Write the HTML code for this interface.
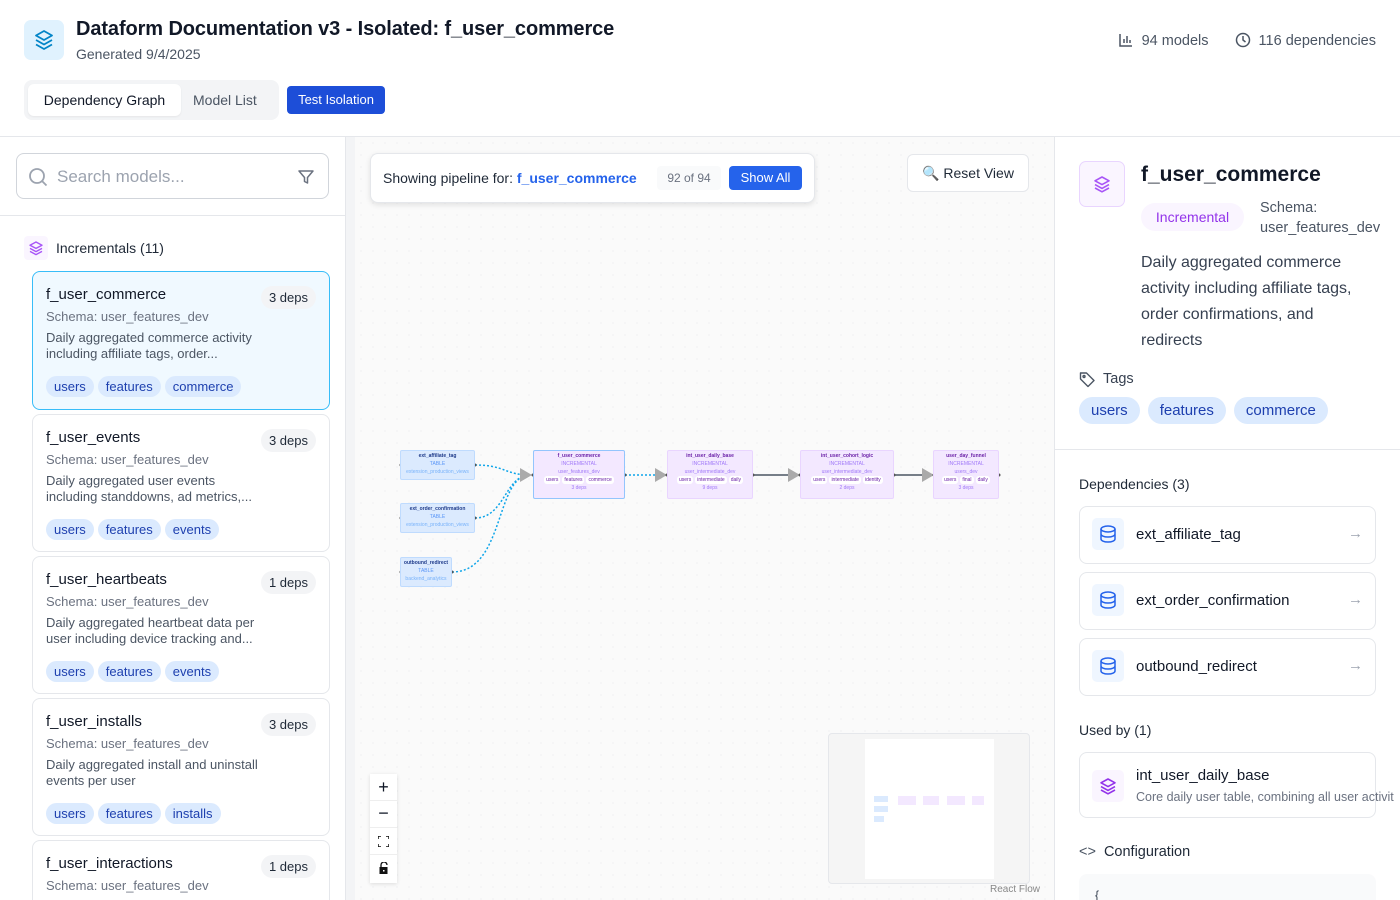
<!DOCTYPE html>
<html style="width:1400px;height:900px;overflow:hidden"><head><meta charset="utf-8"><style>
*{box-sizing:border-box;margin:0;padding:0}
body{width:1400px;height:900px;overflow:hidden;background:#fff;font-family:"Liberation Sans",sans-serif;color:#111827;position:relative}
.abs{position:absolute}
.tag{display:inline-block;background:#dbeafe;color:#1e40af;border-radius:12px;padding:3px 8px;font-size:13px;margin-right:4px}
.card{position:absolute;left:32px;width:298px;height:138px;border:1px solid #e5e7eb;border-radius:8px;background:#fff;padding:14px 13px}
.card .t{font-size:15px;color:#111827}
.card .s{font-size:13px;color:#6b7280;margin-top:6px}
.card .d{font-size:13px;color:#4b5563;margin-top:6px;line-height:16px;width:215px}
.card .tags{margin-top:14px}
.card .deps{position:absolute;right:13px;top:14px;background:#f3f4f6;border-radius:12px;padding:4px 8px;font-size:13px;color:#1f2937}
.node{position:absolute;font-size:5px;text-align:center;line-height:8px;border-radius:2px}
.tb{background:#dbeafe;border:1px solid #bfdbfe;color:#1e3a8a}
.inc{background:#f3e8ff;border:1px solid #e9d5ff;color:#6b21a8}
.node i{font-style:normal;display:block;color:#8b5cf6;opacity:.8}
.node .pl{display:inline-block;background:#fff;border-radius:3px;padding:0 2px;margin:0 1px;color:#6b21a8}
.dep{position:absolute;left:1079px;width:297px;height:58px;border:1px solid #e5e7eb;border-radius:8px;background:#fff}
.dep .ic{position:absolute;left:12px;top:11px;width:32px;height:32px;border-radius:5px;background:#eff6ff}
.dep .n{position:absolute;left:56px;top:19px;font-size:15px}
.dep .ar{position:absolute;right:12px;top:18px;color:#9ca3af;font-size:15px}
.rt{display:inline-block;background:#dbeafe;color:#1e40af;font-size:15px;padding:5px 12px;border-radius:14px;margin-right:8px}
</style></head><body>
<!-- header -->
<div class="abs" style="left:24px;top:20px;width:40px;height:40px;border-radius:7px;background:#e0f2fe">
<svg width="40" height="40" viewBox="0 0 40 40" fill="none" stroke="#0284c7" stroke-width="1.8" stroke-linejoin="round"><path d="M20 11l-8 4.5 8 4.5 8-4.5z"/><path d="M12 20l8 4.5 8-4.5"/><path d="M12 24.5l8 4.5 8-4.5"/></svg></div>
<div class="abs" style="left:76px;top:18px;font-size:20px;font-weight:bold;color:#111827;letter-spacing:-0.1px">Dataform Documentation v3 - Isolated: f_user_commerce</div>
<div class="abs" style="left:76px;top:46px;font-size:14px;color:#4b5563">Generated 9/4/2025</div>
<div class="abs" style="right:24px;top:32px;font-size:14.5px;color:#4b5563;white-space:nowrap">
<svg width="14" height="14" style="vertical-align:-2px;margin-right:9px" fill="none" stroke="#4b5563" stroke-width="1.5"><path d="M1 1v12h12M5 10V6M8 10V3M11 10V7"/></svg>94 models
<svg width="16" height="16" style="vertical-align:-3px;margin:0 8px 0 22px" fill="none" stroke="#4b5563" stroke-width="1.5"><circle cx="8" cy="8" r="6.5"/><path d="M8 4v4l2.5 2"/></svg>116 dependencies</div>
<div class="abs" style="left:24px;top:80px;width:255px;height:40px;background:#f3f4f6;border-radius:8px"></div>
<div class="abs" style="left:28px;top:84px;width:153px;height:32px;background:#fff;border-radius:6px;box-shadow:0 1px 2px rgba(0,0,0,.06);font-size:14px;line-height:32px;text-align:center">Dependency Graph</div>
<div class="abs" style="left:193px;top:84px;font-size:14px;line-height:32px;color:#4b5563">Model List</div>
<div class="abs" style="left:287px;top:86px;width:98px;height:28px;background:#1d4ed8;border-radius:4px;color:#fff;font-size:13px;line-height:28px;text-align:center">Test Isolation</div>
<div class="abs" style="left:0;top:136px;width:1400px;height:1px;background:#e5e7eb"></div>

<!-- left panel -->
<div class="abs" style="left:345px;top:137px;width:10px;height:763px;background:#f3f4f6;border-left:1px solid #e5e7eb"></div>
<div class="abs" style="left:16px;top:153px;width:313px;height:46px;border:1px solid #d1d5db;border-radius:8px">
<svg class="abs" style="left:11px;top:13px" width="20" height="20" fill="none" stroke="#9ca3af" stroke-width="1.8"><circle cx="9" cy="9" r="7"/><path d="M14 14l4.5 4.5"/></svg>
<div class="abs" style="left:40px;top:13px;font-size:17px;color:#9ca3af">Search models...</div>
<svg class="abs" style="left:280px;top:14px" width="18" height="18" fill="none" stroke="#6b7280" stroke-width="1.5" stroke-linejoin="round"><path d="M2 3h14l-5.5 6.5V15l-3-1.5v-4z"/></svg></div>
<div class="abs" style="left:0;top:215px;width:345px;height:1px;background:#e5e7eb"></div>
<div class="abs" style="left:24px;top:236px;width:24px;height:24px;border-radius:4px;background:#faf5ff">
<svg width="24" height="24" fill="none" stroke="#a855f7" stroke-width="1.4" stroke-linejoin="round"><path d="M12 6l-6 3.2 6 3.2 6-3.2z"/><path d="M6 12.4l6 3.2 6-3.2"/><path d="M6 15.4l6 3.2 6-3.2"/></svg></div>
<div class="abs" style="left:56px;top:240px;font-size:14px;color:#1f2937">Incrementals (11)</div>

<div class="card" style="top:271px;height:139px;background:#f0f9ff;border-color:#38bdf8"><div class="t">f_user_commerce</div><div class="s">Schema: user_features_dev</div><div class="d">Daily aggregated commerce activity including affiliate tags, order...</div><div class="tags"><span class="tag">users</span><span class="tag">features</span><span class="tag">commerce</span></div><div class="deps">3 deps</div></div>
<div class="card" style="top:414px"><div class="t">f_user_events</div><div class="s">Schema: user_features_dev</div><div class="d">Daily aggregated user events including standdowns, ad metrics,...</div><div class="tags"><span class="tag">users</span><span class="tag">features</span><span class="tag">events</span></div><div class="deps">3 deps</div></div>
<div class="card" style="top:556px"><div class="t">f_user_heartbeats</div><div class="s">Schema: user_features_dev</div><div class="d">Daily aggregated heartbeat data per user including device tracking and...</div><div class="tags"><span class="tag">users</span><span class="tag">features</span><span class="tag">events</span></div><div class="deps">1 deps</div></div>
<div class="card" style="top:698px"><div class="t">f_user_installs</div><div class="s">Schema: user_features_dev</div><div class="d">Daily aggregated install and uninstall events per user</div><div class="tags"><span class="tag">users</span><span class="tag">features</span><span class="tag">installs</span></div><div class="deps">3 deps</div></div>
<div class="card" style="top:840px;height:60px;border-bottom:none;border-radius:8px 8px 0 0"><div class="t">f_user_interactions</div><div class="s">Schema: user_features_dev</div><div class="deps">1 deps</div></div>

<!-- canvas -->
<div class="abs" style="left:355px;top:137px;width:700px;height:763px;background:#fafafa;background-image:radial-gradient(#e5e7eb 0.6px,transparent 0.7px);background-size:12px 12px"></div>
<div class="abs" style="left:1054px;top:137px;width:1px;height:763px;background:#e5e7eb"></div>
<div class="abs" style="left:370px;top:153px;width:445px;height:50px;background:#fff;border:1px solid #e5e7eb;border-radius:8px;box-shadow:0 2px 6px rgba(0,0,0,.1)">
<div class="abs" style="left:12px;top:16px;font-size:14px;color:#1f2937">Showing pipeline for: <span style="color:#2563eb;font-weight:bold">f_user_commerce</span></div>
<div class="abs" style="left:286px;top:12px;width:64px;height:24px;background:#f9fafb;border-radius:4px;font-size:12px;color:#6b7280;line-height:24px;text-align:center">92 of 94</div>
<div class="abs" style="left:358px;top:12px;width:73px;height:24px;background:#2563eb;border-radius:4px;font-size:13px;color:#fff;line-height:24px;text-align:center">Show All</div></div>
<div class="abs" style="left:907px;top:154px;width:122px;height:38px;background:#fff;border:1px solid #e5e7eb;border-radius:6px;font-size:14px;line-height:36px;text-align:center;color:#1f2937">🔍 Reset View</div>

<svg class="abs" style="left:355px;top:137px" width="700" height="763">
<g fill="none" stroke="#0ea5e9" stroke-width="1.5" stroke-dasharray="2 2">
<path d="M120 328 C150 328 150 338 175 338"/>
<path d="M120 381 C150 381 150 338 175 338"/>
<path d="M97 435 C150 435 140 338 175 338"/>
<path d="M270 338 L310 338"/></g>
<g stroke="#4b5563" stroke-width="1.5"><path d="M399 338h40M540 338h35"/></g>
<g fill="#aaa"><path d="M165 331l12 7-12 7z"/><path d="M300 331l12 7-12 7z"/><path d="M433 331l12 7-12 7z"/><path d="M567 331l12 7-12 7z"/></g>
<g fill="#555"><circle cx="46" cy="328" r="1.5"/><circle cx="120" cy="328" r="1.5"/><circle cx="46" cy="381" r="1.5"/><circle cx="120" cy="381" r="1.5"/><circle cx="46" cy="435" r="1.5"/><circle cx="97" cy="435" r="1.5"/><circle cx="178" cy="338" r="1.5"/><circle cx="270" cy="338" r="1.5"/><circle cx="312" cy="338" r="1.5"/><circle cx="398" cy="338" r="1.5"/><circle cx="445" cy="338" r="1.5"/><circle cx="539" cy="338" r="1.5"/><circle cx="579" cy="338" r="1.5"/><circle cx="644" cy="338" r="1.5"/></g>
</svg>
<div class="node tb" style="left:400px;top:450px;width:75px;height:30px;padding-top:1px"><b>ext_affiliate_tag</b><i style="color:#3b82f6">TABLE</i><i style="color:#60a5fa">extension_production_views</i></div>
<div class="node tb" style="left:400px;top:503px;width:75px;height:30px;padding-top:1px"><b>ext_order_confirmation</b><i style="color:#3b82f6">TABLE</i><i style="color:#60a5fa">extension_production_views</i></div>
<div class="node tb" style="left:400px;top:557px;width:52px;height:30px;padding-top:1px"><b>outbound_redirect</b><i style="color:#3b82f6">TABLE</i><i style="color:#60a5fa">backend_analytics</i></div>
<div class="node inc" style="left:533px;top:450px;width:92px;height:49px;border-color:#93c5fd;padding-top:1px"><b>f_user_commerce</b><i>INCREMENTAL</i><i>user_features_dev</i><span class="pl">users</span><span class="pl">features</span><span class="pl">commerce</span><i>3 deps</i></div>
<div class="node inc" style="left:667px;top:450px;width:86px;height:49px;padding-top:1px"><b>int_user_daily_base</b><i>INCREMENTAL</i><i>user_intermediate_dev</i><span class="pl">users</span><span class="pl">intermediate</span><span class="pl">daily</span><i>9 deps</i></div>
<div class="node inc" style="left:800px;top:450px;width:94px;height:49px;padding-top:1px"><b>int_user_cohort_logic</b><i>INCREMENTAL</i><i>user_intermediate_dev</i><span class="pl">users</span><span class="pl">intermediate</span><span class="pl">identity</span><i>2 deps</i></div>
<div class="node inc" style="left:933px;top:450px;width:66px;height:49px;padding-top:1px"><b>user_day_funnel</b><i>INCREMENTAL</i><i>users_dev</i><span class="pl">users</span><span class="pl">final</span><span class="pl">daily</span><i>3 deps</i></div>

<div class="abs" style="left:370px;top:774px;width:27px;height:109px;background:#fff;box-shadow:0 1px 4px rgba(0,0,0,.12)">
<div style="height:27px;border-bottom:1px solid #eee;text-align:center;font-size:18px;line-height:27px">+</div>
<div style="height:27px;border-bottom:1px solid #eee;text-align:center;font-size:18px;line-height:25px">−</div>
<div style="height:27px;border-bottom:1px solid #eee;position:relative"><svg class="abs" style="left:8px;top:8px" width="11" height="11" fill="none" stroke="#111" stroke-width="1.5"><path d="M0 3V0h3M8 0h3v3M11 8v3H8M3 11H0V8"/></svg></div>
<div style="height:27px;position:relative"><svg class="abs" style="left:9px;top:7px" width="10" height="13"><path d="M2 5V3a3 3 0 0 1 6 0" fill="none" stroke="#111" stroke-width="1.3"/><rect x="0.5" y="5" width="8" height="7" fill="#111"/><rect x="4" y="8" width="1.5" height="1.5" fill="#fff"/></svg></div></div>
<div class="abs" style="left:828px;top:733px;width:202px;height:151px;background:#f5f5f5;border:1px solid #e5e7eb;border-radius:4px">
<div class="abs" style="left:36px;top:5px;width:129px;height:140px;background:#fff"></div>
<div class="abs" style="left:45px;top:62px;width:14px;height:6px;background:#dbeafe"></div>
<div class="abs" style="left:45px;top:72px;width:14px;height:6px;background:#dbeafe"></div>
<div class="abs" style="left:45px;top:82px;width:10px;height:6px;background:#dbeafe"></div>
<div class="abs" style="left:69px;top:62px;width:18px;height:9px;background:#f3e8ff"></div>
<div class="abs" style="left:94px;top:62px;width:16px;height:9px;background:#f3e8ff"></div>
<div class="abs" style="left:118px;top:62px;width:18px;height:9px;background:#f3e8ff"></div>
<div class="abs" style="left:143px;top:62px;width:12px;height:9px;background:#f3e8ff"></div></div>
<div class="abs" style="left:990px;top:884px;font-size:10px;color:#888">React Flow</div>

<!-- right panel -->
<div class="abs" style="left:1079px;top:161px;width:46px;height:46px;border-radius:7px;background:#faf5ff;border:1px solid #e9d5ff">
<svg width="44" height="44" fill="none" stroke="#a855f7" stroke-width="1.6" stroke-linejoin="round"><path d="M22 15l-7 3.8 7 3.8 7-3.8z"/><path d="M15 22.6l7 3.8 7-3.8"/><path d="M15 26l7 3.8 7-3.8"/></svg></div>
<div class="abs" style="left:1141px;top:163px;font-size:21px;font-weight:bold">f_user_commerce</div>
<div class="abs" style="left:1141px;top:203px;width:103px;height:28px;border-radius:14px;background:#faf5ff;color:#9333ea;font-size:14px;line-height:28px;text-align:center">Incremental</div>
<div class="abs" style="left:1260px;top:198px;font-size:14.5px;color:#4b5563;line-height:20px">Schema:<br>user_features_dev</div>
<div class="abs" style="left:1141px;top:250px;width:235px;font-size:16px;color:#374151;line-height:26px">Daily aggregated commerce activity including affiliate tags, order confirmations, and redirects</div>
<svg class="abs" style="left:1079px;top:371px" width="17" height="17" fill="none" stroke="#4b5563" stroke-width="1.4" stroke-linejoin="round"><path d="M1.5 2v6l7.5 7.5 6-6L7.5 2z"/><circle cx="5" cy="5.5" r="1"/></svg>
<div class="abs" style="left:1103px;top:371px;font-size:14.5px;color:#374151">Tags</div>
<div class="abs" style="left:1079px;top:397px;white-space:nowrap"><span class="rt">users</span><span class="rt">features</span><span class="rt">commerce</span></div>
<div class="abs" style="left:1055px;top:449px;width:345px;height:1px;background:#e5e7eb"></div>
<div class="abs" style="left:1079px;top:476px;font-size:14px;color:#1f2937">Dependencies (3)</div>
<div class="dep" style="top:506px"><div class="ic"><svg width="32" height="32" fill="none" stroke="#2563eb" stroke-width="1.5"><ellipse cx="16" cy="11" rx="7" ry="3"/><path d="M9 11v10c0 1.7 3.1 3 7 3s7-1.3 7-3V11M9 16c0 1.7 3.1 3 7 3s7-1.3 7-3"/></svg></div><div class="n">ext_affiliate_tag</div><div class="ar">→</div></div>
<div class="dep" style="top:572px"><div class="ic"><svg width="32" height="32" fill="none" stroke="#2563eb" stroke-width="1.5"><ellipse cx="16" cy="11" rx="7" ry="3"/><path d="M9 11v10c0 1.7 3.1 3 7 3s7-1.3 7-3V11M9 16c0 1.7 3.1 3 7 3s7-1.3 7-3"/></svg></div><div class="n">ext_order_confirmation</div><div class="ar">→</div></div>
<div class="dep" style="top:638px"><div class="ic"><svg width="32" height="32" fill="none" stroke="#2563eb" stroke-width="1.5"><ellipse cx="16" cy="11" rx="7" ry="3"/><path d="M9 11v10c0 1.7 3.1 3 7 3s7-1.3 7-3V11M9 16c0 1.7 3.1 3 7 3s7-1.3 7-3"/></svg></div><div class="n">outbound_redirect</div><div class="ar">→</div></div>
<div class="abs" style="left:1079px;top:722px;font-size:14px;color:#1f2937">Used by (1)</div>
<div class="dep" style="top:752px;height:66px;overflow:visible"><div class="ic" style="top:17px;background:#faf5ff"><svg width="32" height="32" fill="none" stroke="#9333ea" stroke-width="1.6" stroke-linejoin="round"><path d="M16 9l-7 3.8 7 3.8 7-3.8z"/><path d="M9 16.6l7 3.8 7-3.8"/><path d="M9 20l7 3.8 7-3.8"/></svg></div><div class="n" style="top:14px">int_user_daily_base</div><div class="abs" style="left:56px;top:37px;font-size:12.5px;color:#6b7280;white-space:nowrap">Core daily user table, combining all user activit</div></div>
<div class="abs" style="left:1079px;top:844px;font-size:14.5px;color:#1f2937"><span style="color:#4b5563;margin-right:8px">&lt;&gt;</span>Configuration</div>
<div class="abs" style="left:1079px;top:874px;width:297px;height:40px;background:#f9fafb;border-radius:8px;font-size:12px;padding:14px 16px;color:#374151">{</div>
</body></html>
